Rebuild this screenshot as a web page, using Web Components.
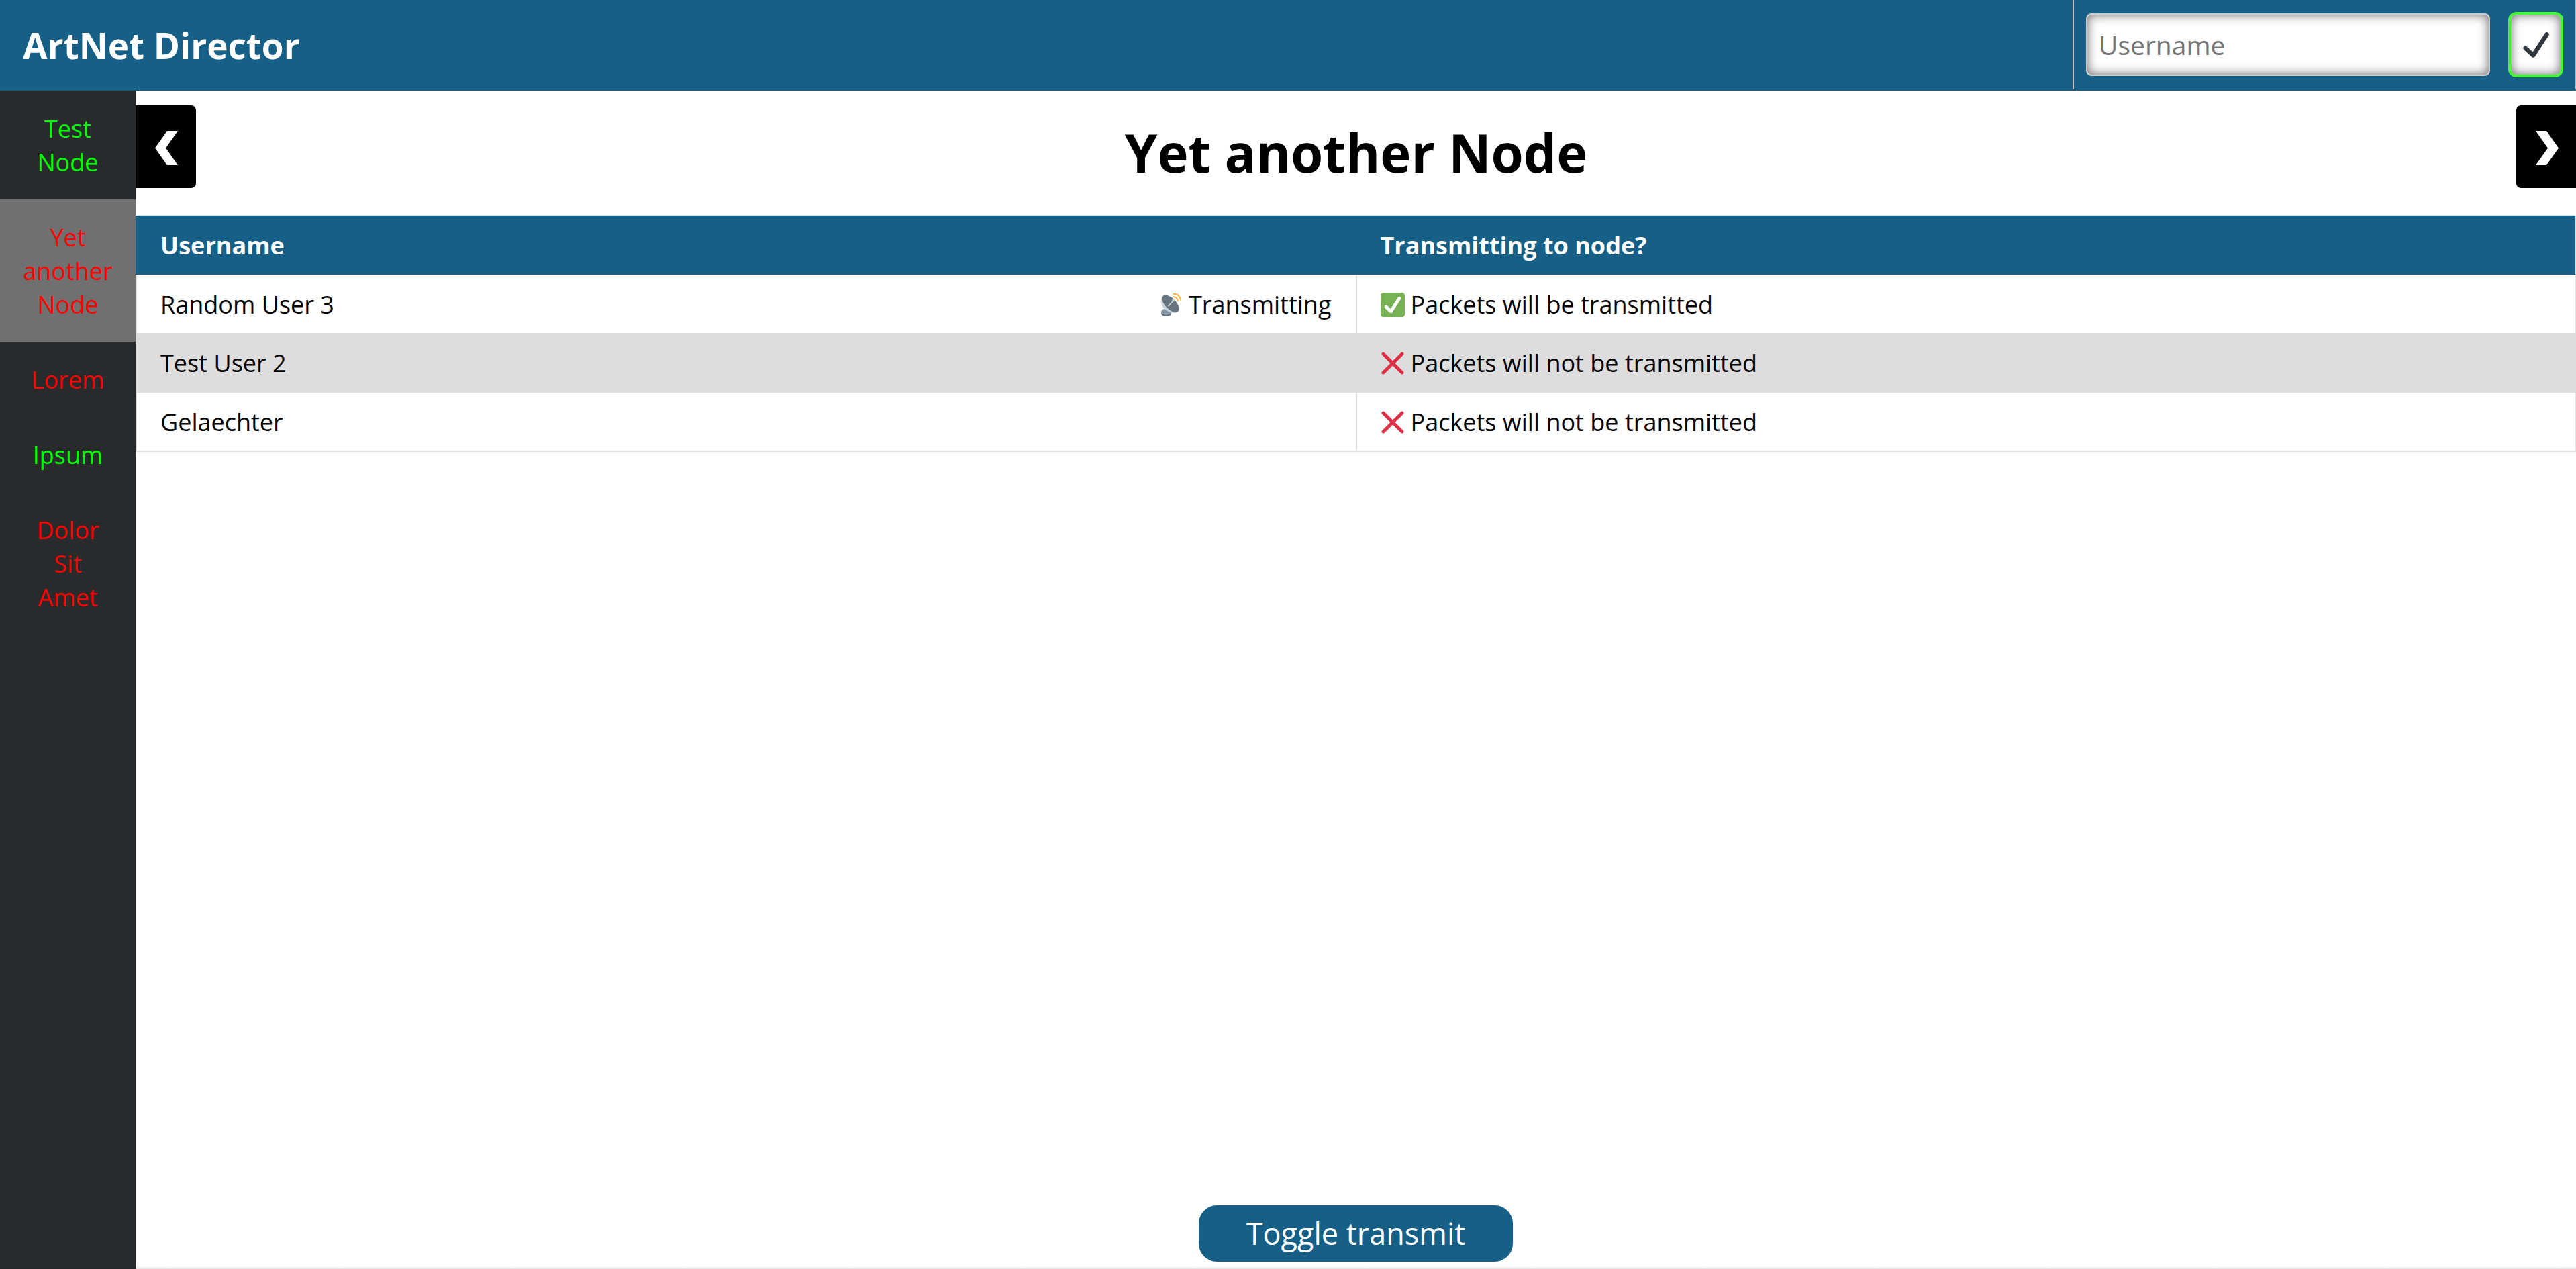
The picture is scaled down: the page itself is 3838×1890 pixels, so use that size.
<!DOCTYPE html>
<html lang="en">
<head>
<meta charset="utf-8">
<title>ArtNet Director</title>
<style>
  html, body { margin: 0; height: 100%; }
  body { font-family: "Open Sans", "Noto Sans", sans-serif; font-size: 36px; line-height: 50px; color: #000; background: #fff; }
</style>
</head>
<body>
<artnet-app></artnet-app>
<script>
const ICONS = {
  check: '<svg viewBox="0 0 36 36" aria-hidden="true"><path fill="#31373D" d="M34.459 1.375c-1.391-.902-3.248-.506-4.149.884L13.5 28.17l-8.198-7.58c-1.217-1.125-3.114-1.051-4.239.166-1.125 1.216-1.051 3.115.166 4.239l10.764 9.952s.309.266.452.359c.504.328 1.07.484 1.63.484.982 0 1.945-.482 2.52-1.368L35.343 5.524c.902-1.39.506-3.248-.884-4.149z"/></svg>',
  yes: '<svg viewBox="0 0 36 36" aria-hidden="true"><path fill="#77B255" d="M36 32c0 2.209-1.791 4-4 4H4c-2.209 0-4-1.791-4-4V4c0-2.209 1.791-4 4-4h28c2.209 0 4 1.791 4 4v28z"/><path fill="#FFF" d="M29.28 6.362c-1.156-.751-2.704-.422-3.458.736L14.936 23.877l-5.029-4.65c-1.014-.938-2.596-.875-3.533.138-.937 1.014-.875 2.596.139 3.533l7.209 6.666c.48.445 1.09.665 1.696.665.673 0 1.534-.282 2.099-1.139.332-.506 12.5-19.27 12.5-19.27.751-1.159.421-2.707-.737-3.458z"/></svg>',
  no: '<svg viewBox="0 0 36 36" aria-hidden="true"><path fill="#DD2E44" d="M21.533 18.002L33.768 5.768c.976-.976.976-2.559 0-3.535-.977-.977-2.559-.977-3.535 0L17.998 14.467 5.764 2.233c-.976-.977-2.56-.977-3.535 0-.977.976-.977 2.559 0 3.535l12.234 12.234L2.201 30.265c-.977.977-.977 2.559 0 3.535.488.488 1.128.732 1.768.732s1.28-.244 1.768-.732l12.262-12.262 12.234 12.234c.488.488 1.128.732 1.768.732.64 0 1.279-.244 1.768-.732.976-.977.976-2.559 0-3.535L21.533 18.002z"/></svg>',
  dish: '<svg viewBox="-4 0 36 36" aria-hidden="true"><path fill="#8899A6" d="M0 29.5C0 26 3 23.500 7.500 23.500S15 27 15 30.500c0 3-3.500 4-7.500 4s-7.500-2-7.500-5z"/><path fill="#66757F" d="M0 30c2 2 4.500 2.500 7.500 2.500s6-.7 7.400-2.200c.2 3.200-3.400 4.700-7.400 4.700S0 33.500 0 30z"/><path fill="#CCD6DD" d="M2.200 5C-1.500 10-.5 18.500 4.500 23.500s14.500 8.500 20.500 5L14 15z"/><ellipse cx="14" cy="16.300" rx="16" ry="8.200" transform="rotate(45 14 16.300)" fill="#66757F"/><path d="M11 19.500 18 12" stroke="#CCD6DD" stroke-width="1.800" stroke-linecap="round"/><circle cx="18.300" cy="11.500" r="2" fill="#CCD6DD"/><path d="M18.300 6.200c3.600.2 6 2.600 6.400 6.200M18.300 1.700c6.300 0 10.800 4.200 11 10.300" fill="none" stroke="#FFAC33" stroke-width="1.800" stroke-linecap="round"/></svg>',
  prev: '<svg viewBox="0 0 34 51" aria-hidden="true"><path fill="#fff" d="M18 0H34L16 25.500 34 51H18L0 25.500z"/></svg>',
  next: '<svg viewBox="0 0 34 51" aria-hidden="true"><path fill="#fff" d="M16 0H0L18 25.500 0 51H16L34 25.500z"/></svg>'
};

class ShadowElement extends HTMLElement {
  connectedCallback() {
    if (this.shadowRoot) return;
    this.attachShadow({ mode: 'open' }).innerHTML =
      '<style>*{box-sizing:border-box}svg{display:block}' + this.styles() + '</style>' + this.markup();
  }
}

customElements.define('login-form', class extends ShadowElement {
  styles() { return `
    :host { display: block; }
    form { display: flex; align-items: center; gap: 27px; height: 133px; padding: 0 18px; border-left: 2px solid #bbb; border-right: 1px solid #bbb; }
    input { width: 602px; height: 93px; margin: 0; padding: 0 17px; border: 2px solid #ccc; border-radius: 8px; background: #fff; font: inherit; font-size: 39px; box-shadow: inset 0 0 16px #666; }
    input::placeholder { color: #757575; opacity: 1; }
    button { display: grid; place-items: center; width: 82px; height: 97px; padding: 0; border: 4px solid #46f534; border-radius: 12px; background: #fff; box-shadow: inset 0 0 16px #666; }
    svg { width: 39px; height: 39px; }`; }
  markup() { return `<form><input type="text" aria-label="Username" placeholder="Username"><button type="button" aria-label="Save username">${ICONS.check}</button></form>`; }
});

customElements.define('app-header', class extends ShadowElement {
  styles() { return `
    :host { display: block; background: #166088; color: #fff; }
    header { display: flex; justify-content: space-between; height: 135px; }
    .brand { align-self: center; padding-left: 34px; font-size: 53px; line-height: 75px; font-weight: 700; }`; }
  markup() { return '<header><div class="brand"><slot></slot></div><login-form></login-form></header>'; }
});

customElements.define('node-link', class extends ShadowElement {
  styles() { return `
    :host { display: block; text-align: center; }
    a { display: block; padding: 32px 34px 30px; color: #f00; text-decoration: none; }
    :host([online]) a { color: #0f0; }
    :host([active]) a { background: #707070; }`; }
  markup() { return '<a href="#"><slot></slot></a>'; }
});

customElements.define('node-sidebar', class extends ShadowElement {
  styles() { return `
    :host { display: block; flex: none; width: 202px; background: #282a2c; }`; }
  markup() { return '<nav aria-label="Nodes"><slot></slot></nav>'; }
});

customElements.define('node-title', class extends ShadowElement {
  styles() { return `
    :host { display: block; }
    div { display: flex; justify-content: space-between; height: 185px; }
    h1 { align-self: center; margin: 0; font-size: 78px; line-height: 109px; font-weight: 700; }
    button { display: grid; place-items: center; width: 90px; height: 123px; margin: 22px 0 0; padding: 4px 0 0 2px; border: 0; background: #000; border-radius: 0 7px 7px 0; }
    button:last-child { width: 89px; border-radius: 7px 0 0 7px; }
    svg { width: 34px; height: 51px; }`; }
  markup() { return `<div><button type="button" aria-label="Previous node">${ICONS.prev}</button><h1><slot></slot></h1><button type="button" aria-label="Next node">${ICONS.next}</button></div>`; }
});

customElements.define('user-table', class extends ShadowElement {
  styles() { return `
    :host { display: block; }
    table { width: 100%; table-layout: fixed; border-spacing: 0; border-bottom: 2px solid #ddd; border-right: 1px solid #ddd; }
    th { padding: 20px 37px 18px; text-align: left; font-weight: 700; color: #fff; background: #166088; border-top: 1px solid #ddd; border-bottom: 1px solid #ddd; }
    td { padding: 19px 36px 17px 35px; border-left: 2px solid #ddd; }
    tr:nth-child(even) td { background: #ddd; border-top: 1px solid #ddd; border-bottom: 2px solid #ddd; }
    .cell, .status { display: flex; align-items: center; }
    .cell { justify-content: space-between; }
    .status { gap: 9px; }
    svg { width: 36px; height: 36px; }`; }
  markup() {
    const users = [['Random User 3', true], ['Test User 2', false], ['Gelaechter', false]];
    const status = (icon, text) => `<span class="status">${ICONS[icon]}<span>${text}</span></span>`;
    const rows = users.map(([name, on]) => `<tr><td><div class="cell"><span>${name}</span>${on ? status('dish', 'Transmitting') : ''}</div></td><td>${on ? status('yes', 'Packets will be transmitted') : status('no', 'Packets will not be transmitted')}</td></tr>`).join('');
    return `<table><thead><tr><th scope="col">Username</th><th scope="col">Transmitting to node?</th></tr></thead><tbody>${rows}</tbody></table>`;
  }
});

customElements.define('toggle-button', class extends ShadowElement {
  styles() { return `
    :host { display: block; }
    button { display: block; height: 84px; padding: 0 71px; border: 0; border-radius: 27px; background: #166088; color: #fff; font: inherit; font-size: 45px; line-height: 60px; }`; }
  markup() { return '<button type="button"><slot></slot></button>'; }
});

customElements.define('artnet-app', class extends ShadowElement {
  styles() { return `
    :host { position: relative; display: flex; flex-direction: column; min-height: 100vh; }
    :host::after { content: ""; position: absolute; left: 0; right: 0; bottom: 0; height: 4px; background: linear-gradient(rgba(0,0,0,0), rgba(0,0,0,.12)); }
    .body { display: flex; flex: 1; }
    main { display: flex; flex-direction: column; flex: 1; min-width: 0; }
    toggle-button { align-self: center; margin: auto 0 11px; }`; }
  markup() { return `
    <app-header>ArtNet Director</app-header>
    <div class="body">
      <node-sidebar>
        <node-link online>Test Node</node-link>
        <node-link active>Yet another Node</node-link>
        <node-link>Lorem</node-link>
        <node-link online>Ipsum</node-link>
        <node-link>Dolor Sit Amet</node-link>
      </node-sidebar>
      <main>
        <node-title>Yet another Node</node-title>
        <user-table></user-table>
        <toggle-button>Toggle transmit</toggle-button>
      </main>
    </div>`; }
});
</script>
</body>
</html>
